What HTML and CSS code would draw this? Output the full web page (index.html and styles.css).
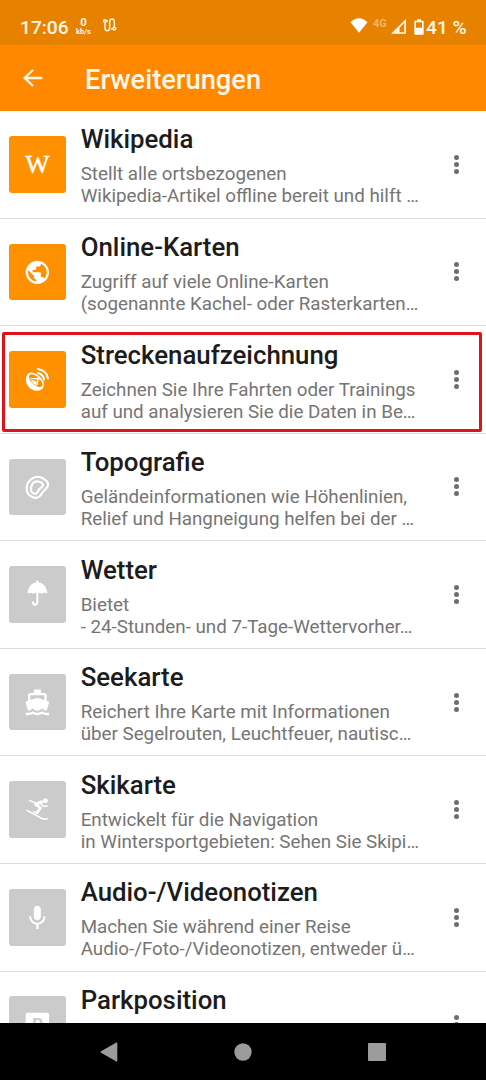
FILE: index.html
```html
<!DOCTYPE html>
<html lang="de">
<head>
<meta charset="utf-8">
<title>Erweiterungen</title>
<link rel="stylesheet" href="styles.css">
</head>
<body>
<div class="screen">
  <div class="status">
    <span class="clock">17:06</span>
    <span class="rate"><b>0</b><small>kb/s</small></span>
    <svg class="route" viewBox="0 0 42 42"><g fill="none" stroke="#fff6e6" stroke-width="4.5"><circle cx="6" cy="9" r="4"/><path d="M10 9h5M6 13v16q0 9 7 9t7-9V12q0-9 7-9t7 9v15"/><circle cx="34" cy="32" r="4"/><path d="M30 33h-6"/></g></svg>
    <span class="spacer"></span>
    <svg class="wifi" viewBox="0 0 54 46"><path fill="#fff" d="M1 13Q27-11 53 13L27 45Z"/></svg>
    <span class="lte">4G</span>
    <svg class="signal" viewBox="0 0 44 44"><path fill="#fff6e6" fill-rule="evenodd" d="M0 43L44 0V43ZM25 39H39V12L25 26Z"/></svg>
    <svg class="battery" viewBox="0 0 30 46"><path fill="#fff" fill-rule="evenodd" d="M9 0H21V4H27Q29 4 29 6V44Q29 46 27 46H3Q1 46 1 44V6Q1 4 3 4H9ZM6 9V25H24V9Z"/></svg>
    <span class="percent">41 %</span>
  </div>
  <header class="appbar">
    <svg class="back" viewBox="0 0 60 54"><path d="M58 27H5M30 3L5 27L30 51" fill="none" stroke="#fff6e6" stroke-width="7"/></svg>
    <h1>Erweiterungen</h1>
  </header>
  <main class="list">
    <article class="row">
      <svg class="tile on" viewBox="0 0 170 170"><text class="wiki" x="85" y="110">W</text></svg>
      <div class="text"><h2>Wikipedia</h2><p>Stellt alle ortsbezogenen<br>Wikipedia-Artikel offline bereit und hilft …</p></div>
      <div class="menu"><i></i><i></i><i></i></div>
    </article>
    <article class="row">
      <svg class="tile on" viewBox="0 0 170 170"><path transform="translate(43 43) scale(3.5)" d="M12 2C6.48 2 2 6.48 2 12s4.48 10 10 10 10-4.48 10-10S17.52 2 12 2zm-1 17.93c-3.95-.49-7-3.85-7-7.93 0-.62.08-1.21.21-1.79L9 15v1c0 1.1.9 2 2 2v1.93zm6.9-2.54c-.26-.81-1-1.39-1.9-1.39h-1v-3c0-.55-.45-1-1-1H8v-2h2c.55 0 1-.45 1-1V7h2c1.1 0 2-.9 2-2v-.41c2.93 1.19 5 4.06 5 7.41 0 2.08-.8 3.97-2.1 5.39z"/></svg>
      <div class="text"><h2>Online-Karten</h2><p>Zugriff auf viele Online-Karten<br>(sogenannte Kachel- oder Rasterkarten…</p></div>
      <div class="menu"><i></i><i></i><i></i></div>
    </article>
    <article class="row marked">
      <svg class="tile on" viewBox="0 0 170 170">
        <path d="M57 69C49 77 48 93 57 106C67 119 84 124 98 115L102 111Z"/>
        <ellipse cx="79" cy="90" rx="31" ry="19" transform="rotate(43 79 90)"/>
        <ellipse class="cut" cx="80" cy="89" rx="25" ry="12.500" transform="rotate(43 80 89)"/>
        <path class="line" stroke-width="4" d="M66 83L88 83M84 100L88 83"/>
        <path d="M66 87L82 90L84 104Q70 99 66 87Z"/>
        <circle cx="89" cy="82" r="5"/>
        <path class="line" stroke-width="6.500" d="M87 66Q102 70 105 85M86 54Q113 58 117 82"/>
      </svg>
      <div class="text"><h2>Streckenaufzeichnung</h2><p>Zeichnen Sie Ihre Fahrten oder Trainings<br>auf und analysieren Sie die Daten in Be…</p></div>
      <div class="menu"><i></i><i></i><i></i></div>
    </article>
    <article class="row">
      <svg class="tile" viewBox="0 0 170 170">
        <path class="line" stroke-width="6.500" d="M74 56C86 50 96 54 105 60C115 66 121 74 115 84C108 95 101 96 97 106C91 117 78 120 67 113C54 105 50 92 55 76C59 65 65 60 74 56Z"/>
        <path class="line" stroke-width="6.500" d="M76 69C84 65 93 68 99 72C106 77 102 81 96 86C89 91 88 95 85 100C81 106 73 105 69 100C63 93 66 75 76 69Z"/>
      </svg>
      <div class="text"><h2>Topografie</h2><p>Geländeinformationen wie Höhenlinien,<br>Relief und Hangneigung helfen bei der …</p></div>
      <div class="menu"><i></i><i></i><i></i></div>
    </article>
    <article class="row">
      <svg class="tile" viewBox="0 0 170 170">
        <path d="M56 83C57 62 69 51 82 49V45Q85 41 88 45V49C101 51 114 62 115 83Q106 77 98 83Q92 79 88 82H82Q77 79 71 83Q64 77 56 83Z"/>
        <path class="line" stroke-width="6" d="M85 78V108Q85 116 78 116Q72 116 72 109"/>
      </svg>
      <div class="text"><h2>Wetter</h2><p>Bietet<br>- 24-Stunden- und 7-Tage-Wettervorher…</p></div>
      <div class="menu"><i></i><i></i><i></i></div>
    </article>
    <article class="row">
      <svg class="tile" viewBox="0 0 170 170"><path transform="translate(43 43) scale(3.5)" d="M20 21c-1.39 0-2.78-.47-4-1.32-2.44 1.71-5.56 1.71-8 0C6.78 20.53 5.39 21 4 21H2v2h2c1.38 0 2.74-.35 4-.99 2.52 1.29 5.48 1.29 8 0 1.26.65 2.62.99 4 .99h2v-2h-2zM3.95 19H4c1.6 0 3.02-.88 4-2 .98 1.12 2.4 2 4 2s3.02-.88 4-2c.98 1.12 2.4 2 4 2h.05l1.89-6.68c.08-.26.06-.54-.06-.78s-.34-.42-.6-.5L20 10.62V6c0-1.1-.9-2-2-2h-3V1H9v3H6c-1.1 0-2 .9-2 2v4.62l-1.29.42c-.26.08-.48.26-.6.5s-.15.52-.06.78L3.95 19zM6 6h12v3.97L12 8 6 9.97V6z"/></svg>
      <div class="text"><h2>Seekarte</h2><p>Reichert Ihre Karte mit Informationen<br>über Segelrouten, Leuchtfeuer, nautisc…</p></div>
      <div class="menu"><i></i><i></i><i></i></div>
    </article>
    <article class="row">
      <svg class="tile" viewBox="0 0 170 170">
        <circle cx="109" cy="59" r="7.500"/>
        <path class="line" stroke-width="4.500" d="M61 58L88 70M54 88L96 111Q106 117 115 113M95 68L104 76L115 75"/>
        <path class="line" stroke-width="10" d="M80 69L97 63"/>
        <path class="line" stroke-width="8" d="M80 71L95 81L84 95"/>
        <path class="line" stroke-width="4" d="M73 92L84 97"/>
      </svg>
      <div class="text"><h2>Skikarte</h2><p>Entwickelt für die Navigation<br>in Wintersportgebieten: Sehen Sie Skipi…</p></div>
      <div class="menu"><i></i><i></i><i></i></div>
    </article>
    <article class="row">
      <svg class="tile" viewBox="0 0 170 170"><path transform="translate(43 43) scale(3.5)" d="M12 14.500c1.660 0 3-1.340 3-3V5c0-1.660-1.340-3-3-3S9 3.340 9 5v6.500c0 1.660 1.340 3 3 3zM17.300 11c0 3.300-2.540 5.600-5.300 5.600S6.700 14.300 6.700 11H5c0 3.800 2.720 6.730 6 7.220V22h2v-3.780c3.280-.48 6-3.400 6-7.220z"/></svg>
      <div class="text"><h2>Audio-/Videonotizen</h2><p>Machen Sie während einer Reise<br>Audio-/Foto-/Videonotizen, entweder ü…</p></div>
      <div class="menu"><i></i><i></i><i></i></div>
    </article>
    <article class="row">
      <svg class="tile" viewBox="0 0 170 170"><rect x="50" y="50" width="70" height="70" rx="5"/><text class="park" x="86" y="103">P</text></svg>
      <div class="text"><h2>Parkposition</h2></div>
      <div class="menu"><i></i><i></i><i></i></div>
    </article>
  </main>
  <nav class="navbar">
    <svg viewBox="0 0 54 60"><path d="M48 2Q52 0 52 4V56Q52 60 48 58L3 32Q0 30 3 28Z"/></svg>
    <svg viewBox="0 0 54 60"><circle cx="27" cy="30" r="26"/></svg>
    <svg viewBox="0 0 54 60"><rect y="3" width="54" height="54" rx="3"/></svg>
  </nav>
</div>
</body>
</html>
```

FILE: styles.css
```css
*, *::after { box-sizing: border-box; }
body { margin: 0; font-family: Roboto, "Liberation Sans", sans-serif; background: #fff; }
.screen { width: 486px; height: 1080px; display: flex; flex-direction: column; overflow: hidden; }

.status { flex: none; height: 45px; padding: 8px 20px 0 20px; display: flex; align-items: center; background: #e68200; color: #fff6e6; }
.clock { width: 48px; padding-top: 1px; font-size: 19.2px; font-weight: 500; white-space: nowrap; }
.rate { width: 15px; margin-left: 8px; display: flex; flex-direction: column; align-items: center; }
.rate b { font-size: 11.5px; line-height: 10px; font-weight: 700; }
.rate small { font-size: 7.5px; line-height: 9px; font-weight: 700; }
.route { width: 14px; height: 14px; margin: -3px 0 0 12px; }
.spacer { flex: 1; }
.wifi { width: 18px; height: 15px; margin: -2px 5px 0 0; }
.lte { width: 15px; margin: -7px 3px 0 0; font-size: 11px; font-weight: 700; color: #f3b566; }
.signal { width: 15px; height: 15px; margin-right: 8px; }
.battery { width: 10px; height: 16px; margin-right: 2px; }
.percent { width: 40px; padding-top: 1px; font-size: 19.2px; font-weight: 500; white-space: nowrap; }

.appbar { flex: none; height: 66px; padding-left: 23px; display: flex; align-items: center; background: #ff8800; color: #fff6e6; }
.back { width: 20px; height: 18px; margin-right: 42px; }
.appbar h1 { margin: 3px 0 0; font-size: 27.3px; font-weight: 500; line-height: 32px; }

.list { flex: none; height: 912px; overflow: hidden; }
.row { position: relative; height: 107.57px; padding: 0 24px 0 9.4px; display: flex; align-items: center; border-bottom: 1px solid #dcdddd; }
.tile { flex: none; width: 56.7px; height: 56.7px; margin-right: 14.6px; border-radius: 3px; background: #cbcbcb; fill: #fff; --tile: #cbcbcb; }
.tile.on { background: #ff9100; --tile: #ff9100; }
.tile .line { fill: none; stroke: #fff; stroke-linecap: round; stroke-linejoin: round; }
.tile .cut { fill: var(--tile); }
.wiki { font: 77px "Liberation Serif", serif; text-anchor: middle; stroke: #fff; stroke-width: 1.5; }
.park { font: bold 50px Roboto, sans-serif; text-anchor: middle; fill: var(--tile); }
.text { flex: 1; align-self: flex-start; padding-top: 12.4px; white-space: nowrap; }
.text h2 { margin: 0; font-size: 25.8px; line-height: 32px; font-weight: 500; color: #1c1c1c; }
.text p { margin: 8px 0 0; font-size: 18.77px; line-height: 22px; color: #757575; }
.menu { flex: none; width: 11px; display: flex; flex-direction: column; align-items: center; gap: 2px; }
.menu i { width: 5px; height: 5px; border-radius: 50%; background: #6e6e6e; }

/* Highlight frame over the recording row */
.marked::after { content: ""; position: absolute; left: 2px; top: 6px; right: 4px; height: 100px; border: 3px solid #de1219; border-radius: 2px; }

.navbar { flex: 1; display: flex; align-items: center; justify-content: center; gap: 116px; background: #000; }
.navbar svg { width: 18px; height: 20px; fill: #9c9c9c; }
```
